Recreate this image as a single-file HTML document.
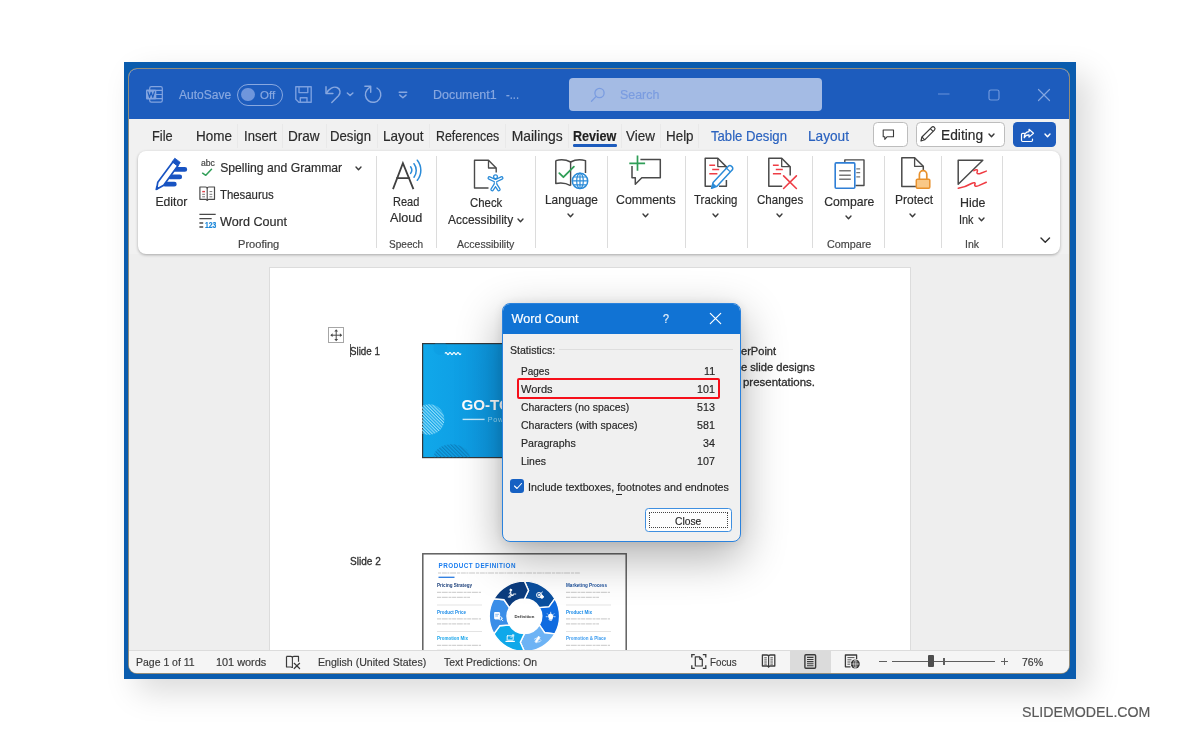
<!DOCTYPE html>
<html>
<head>
<meta charset="utf-8">
<title>Word Count</title>
<style>
*{box-sizing:border-box;margin:0;padding:0}
html,body{width:1199px;height:742px;overflow:hidden;background:#fff}
body{font-family:"Liberation Sans",sans-serif;color:#2b2b2b;position:relative}
#root{position:absolute;left:0;top:0;width:1199px;height:742px;will-change:transform}
.a{position:absolute;display:block}
.t{position:absolute;white-space:nowrap;line-height:1;transform-origin:0 50%;-webkit-text-stroke:.18px currentColor}
</style>
</head>
<body><div id="root">
<div class="a" style="left:124.00px;top:62.00px;width:952.00px;height:617.00px;box-shadow:13px 13px 30px 0 rgba(0,0,0,.145);background:#0a5cae;"></div>
<div class="a" id="win" style="left:129px;top:69.3px;width:940px;height:603.3px;border-radius:8px;background:#f1f1f1;overflow:hidden;box-shadow:0 0 0 1px #958e7a;"></div>
<div class="a" style="left:129.00px;top:69.30px;width:940.00px;height:49.70px;background:#1d5cbd;border-radius:8px 8px 0 0;"></div>
<div class="a" style="left:129.00px;top:254.00px;width:940.00px;height:396.00px;background:#eeeeee;"></div>
<div class="a" style="left:269.50px;top:268.30px;width:640.30px;height:382.00px;background:#fff;box-shadow:0 0 0 1px #dcdcdc;"></div>
<div class="a" style="left:129.00px;top:649.50px;width:940.00px;height:23.10px;background:#f5f5f5;border-top:1px solid #dcdcdc;border-radius:0 0 8px 8px;"></div>
<div class="a" style="left:138.00px;top:151.00px;width:922.40px;height:103.00px;background:#fff;border-radius:8px;box-shadow:0 1px 3px rgba(0,0,0,.30);"></div>
<svg class="a" style="left:143.00px;top:83.00px;" width="24" height="24" viewBox="143 83 24 24" fill="none"><rect x="149.700" y="86.600" width="12.600" height="15.600" rx="1.600" stroke="#82a4e0" stroke-width="1.200"/>
<path d="M156 90.400H162.300M156 94.500H162.300M156 98.600H162.300" stroke="#82a4e0" stroke-width="1.100"/>
<rect x="146" y="89.600" width="10.300" height="10" rx="1.100" fill="#82a4e0"/>
<path d="M147.900 91.900L149.500 97.400L151.150 92.200L152.800 97.400L154.400 91.900" stroke="#1d5cbd" stroke-width="1.200" stroke-linejoin="round" stroke-linecap="round"/></svg>
<div class="t" style="left:178.70px;top:89.00px;font-size:12.40px;color:#88a8e0;transform:scaleX(0.9726);">AutoSave</div>
<div class="a" style="left:237.00px;top:84.00px;width:46.00px;height:21.50px;border:1.3px solid #88a8e0;border-radius:11px;"></div>
<div class="a" style="left:241.20px;top:87.60px;width:13.80px;height:13.80px;background:#6f96dc;border-radius:50%;"></div>
<div class="t" style="left:260.30px;top:90.00px;font-size:10.60px;color:#88a8e0;transform:scaleX(1.0830);">Off</div>
<svg class="a" style="left:292.00px;top:83.00px;" width="24" height="24" viewBox="292 83 24 24" fill="none"><g stroke="#7a9fe0" stroke-width="1.400" stroke-linejoin="round"><path d="M295.800 86.800H311.200V102.200H298.800L295.800 99.200z"/>
<path d="M299 86.800V92.600H307.800V86.800M300.300 102.200V97.800H307V102.200"/></g></svg>
<svg class="a" style="left:320.00px;top:80.00px;" width="95" height="30" viewBox="320 80 95 30" fill="none"><g stroke="#88a8e0" stroke-width="1.450" stroke-linecap="round" stroke-linejoin="round">
<path d="M326 86.800V93.400H332.900"/>
<path d="M326.600 93C329 88.400 333.400 86.200 337 87.500C340.400 88.800 341 93 338.500 95.800L331.800 102.400"/>
<path d="M347.300 92.900L350.100 95.600L352.900 92.900"/>
<path d="M364.900 86.300H370.700V92.200"/>
<path d="M370.300 86.800L367.100 89.800A7.700 7.700 0 1 0 377 88"/>
<path d="M399.200 92.300H406.700"/><path d="M399.800 95.100L402.900 97.800L406 95.100"/>
</g></svg>
<div class="t" style="left:433.30px;top:89.00px;font-size:12.40px;color:#88a8e0;transform:scaleX(1.0045);">Document1</div>
<div class="t" style="left:505.50px;top:89.00px;font-size:12.40px;color:#88a8e0;transform:scaleX(0.8988);">-...</div>
<div class="a" style="left:569.00px;top:78.00px;width:253.00px;height:33.00px;background:#a4bbe4;border-radius:4px;"></div>
<svg class="a" style="left:589.00px;top:86.00px;" width="18" height="18" viewBox="0 0 18 18" fill="none"><circle cx="10.500" cy="7" r="4.600" stroke="#7a9ce0" stroke-width="1.300"/><path d="M7.200 10.400L2.500 15.300" stroke="#7a9ce0" stroke-width="1.300" stroke-linecap="round"/></svg>
<div class="t" style="left:619.60px;top:89.00px;font-size:12.60px;color:#7a9ce0;transform:scaleX(0.9869);">Search</div>
<svg class="a" style="left:937.00px;top:89.00px;" width="14" height="10" viewBox="0 0 14 10" fill="none"><path d="M1 5h11.500" stroke="#5f8ad6" stroke-width="1.200"/></svg>
<svg class="a" style="left:988.00px;top:89.00px;" width="12" height="12" viewBox="0 0 12 12" fill="none"><rect x="1" y="1" width="10" height="10" rx="1.800" stroke="#6f97dc" stroke-width="1.200"/></svg>
<svg class="a" style="left:1037.00px;top:88.00px;" width="14" height="14" viewBox="0 0 14 14" fill="none"><path d="M1.500 1.500l11 11M12.500 1.500l-11 11" stroke="#84a6e0" stroke-width="1.200" stroke-linecap="round"/></svg>
<div class="t" style="left:151.70px;top:130.00px;font-size:13.90px;color:#2a2a2a;transform:scaleX(0.9197);">File</div>
<div class="t" style="left:195.70px;top:130.00px;font-size:13.90px;color:#2a2a2a;transform:scaleX(0.9709);">Home</div>
<div class="t" style="left:244.00px;top:130.00px;font-size:13.90px;color:#2a2a2a;transform:scaleX(0.9406);">Insert</div>
<div class="t" style="left:288.30px;top:130.00px;font-size:13.90px;color:#2a2a2a;transform:scaleX(0.9773);">Draw</div>
<div class="t" style="left:330.00px;top:130.00px;font-size:13.90px;color:#2a2a2a;transform:scaleX(0.9476);">Design</div>
<div class="t" style="left:382.70px;top:130.00px;font-size:13.90px;color:#2a2a2a;transform:scaleX(0.9728);">Layout</div>
<div class="t" style="left:435.70px;top:130.00px;font-size:13.90px;color:#2a2a2a;transform:scaleX(0.8905);">References</div>
<div class="t" style="left:511.70px;top:130.00px;font-size:13.90px;color:#2a2a2a;">Mailings</div>
<div class="t" style="left:573.30px;top:130.00px;font-size:13.90px;color:#1f1f1f;font-weight:bold;transform:scaleX(0.9060);">Review</div>
<div class="a" style="left:573.00px;top:144.30px;width:44.00px;height:2.60px;background:#1d5cbd;border-radius:1.3px;"></div>
<div class="t" style="left:626.00px;top:130.00px;font-size:13.90px;color:#2a2a2a;transform:scaleX(0.9706);">View</div>
<div class="t" style="left:665.70px;top:130.00px;font-size:13.90px;color:#2a2a2a;transform:scaleX(0.9654);">Help</div>
<div class="t" style="left:710.70px;top:130.00px;font-size:13.90px;color:#2a62bf;transform:scaleX(0.9457);">Table Design</div>
<div class="t" style="left:808.30px;top:130.00px;font-size:13.90px;color:#2a62bf;transform:scaleX(0.9824);">Layout</div>
<div class="a" style="left:237.30px;top:124.00px;width:1.00px;height:24.00px;background:#e9e9e9;"></div>
<div class="a" style="left:282.00px;top:124.00px;width:1.00px;height:24.00px;background:#e9e9e9;"></div>
<div class="a" style="left:325.70px;top:124.00px;width:1.00px;height:24.00px;background:#e9e9e9;"></div>
<div class="a" style="left:376.70px;top:124.00px;width:1.00px;height:24.00px;background:#e9e9e9;"></div>
<div class="a" style="left:429.00px;top:124.00px;width:1.00px;height:24.00px;background:#e9e9e9;"></div>
<div class="a" style="left:505.00px;top:124.00px;width:1.00px;height:24.00px;background:#e9e9e9;"></div>
<div class="a" style="left:567.50px;top:124.00px;width:1.00px;height:24.00px;background:#e9e9e9;"></div>
<div class="a" style="left:621.00px;top:124.00px;width:1.00px;height:24.00px;background:#e9e9e9;"></div>
<div class="a" style="left:660.00px;top:124.00px;width:1.00px;height:24.00px;background:#e9e9e9;"></div>
<div class="a" style="left:697.50px;top:124.00px;width:1.00px;height:24.00px;background:#e9e9e9;"></div>
<div class="a" style="left:873.20px;top:122.40px;width:34.60px;height:24.60px;background:#fff;border:1px solid #bdbdbd;border-radius:4.500px;"></div>
<svg class="a" style="left:882.00px;top:129.00px;" width="13" height="12" viewBox="0 0 13 12" fill="none"><path d="M1.200 1h10.300v6.700H5.200L2.800 10.300V7.700H1.200z" stroke="#3a3a3a" stroke-width="1.100" stroke-linejoin="round"/></svg>
<div class="a" style="left:916.40px;top:122.40px;width:88.60px;height:24.60px;background:#fff;border:1px solid #bdbdbd;border-radius:4.500px;"></div>
<svg class="a" style="left:918.20px;top:125.30px;" width="20" height="20" viewBox="0 0 20 20" fill="none"><path d="M3 16l.9-4L13.600 2.300c.8-.8 2-.8 2.800 0s.8 2 0 2.800L6.700 14.800z" stroke="#3a3a3a" stroke-width="1.200" stroke-linejoin="round"/><path d="M3.900 12l2.800 2.800M12.300 3.600l2.800 2.800" stroke="#3a3a3a" stroke-width="1.100"/></svg>
<div class="t" style="left:941.40px;top:129.00px;font-size:13.90px;color:#2a2a2a;transform:scaleX(0.9905);">Editing</div>
<svg class="a" style="left:987.50px;top:133.20px;" width="7" height="4.8" viewBox="0 0 7 4.8" fill="none"><path d="M1 1 L3.5 3.8 L6 1" stroke="#3a3a3a" stroke-width="1.4" stroke-linecap="round" stroke-linejoin="round"/></svg>
<div class="a" style="left:1013.20px;top:122.00px;width:43.00px;height:25.20px;background:#1d5cbd;border-radius:4.500px;"></div>
<svg class="a" style="left:1020.00px;top:127.50px;" width="15" height="15" viewBox="0 0 15 15" fill="none"><path d="M4.500 5.300H2.700c-.7 0-1.200.5-1.200 1.200v5.800c0 .7.500 1.200 1.200 1.200h8.600c.7 0 1.200-.5 1.200-1.200V11" stroke="#fff" stroke-width="1.200" stroke-linecap="round"/><path d="M9 1.300l4.500 3.900L9 9.100V6.800C6.500 6.800 5 7.800 4.200 9.800 4.200 6 6 3.800 9 3.600z" stroke="#fff" stroke-width="1.200" stroke-linejoin="round"/></svg>
<svg class="a" style="left:1043.90px;top:132.90px;" width="7" height="4.8" viewBox="0 0 7 4.8" fill="none"><path d="M1 1 L3.5 3.8 L6 1" stroke="#fff" stroke-width="1.4" stroke-linecap="round" stroke-linejoin="round"/></svg>
<div class="a" style="left:376.00px;top:156.00px;width:1.00px;height:92.00px;background:#dcdcdc;"></div>
<div class="a" style="left:436.00px;top:156.00px;width:1.00px;height:92.00px;background:#dcdcdc;"></div>
<div class="a" style="left:535.00px;top:156.00px;width:1.00px;height:92.00px;background:#dcdcdc;"></div>
<div class="a" style="left:607.00px;top:156.00px;width:1.00px;height:92.00px;background:#dcdcdc;"></div>
<div class="a" style="left:685.00px;top:156.00px;width:1.00px;height:92.00px;background:#dcdcdc;"></div>
<div class="a" style="left:747.00px;top:156.00px;width:1.00px;height:92.00px;background:#dcdcdc;"></div>
<div class="a" style="left:812.00px;top:156.00px;width:1.00px;height:92.00px;background:#dcdcdc;"></div>
<div class="a" style="left:884.00px;top:156.00px;width:1.00px;height:92.00px;background:#dcdcdc;"></div>
<div class="a" style="left:941.00px;top:156.00px;width:1.00px;height:92.00px;background:#dcdcdc;"></div>
<div class="a" style="left:1002.00px;top:156.00px;width:1.00px;height:92.00px;background:#dcdcdc;"></div>
<svg class="a" style="left:138.00px;top:151.00px;" width="923" height="103" viewBox="138 151 923 103" fill="none"><g stroke="#1853c2" stroke-width="4.800" stroke-linecap="round"><path d="M175 169.400H184.800M170 176.900H179.700M165 184.200H174.300"/></g>
<path d="M173 161.800L178 165.600L163.700 185.200L156.600 189.300L157.800 182.200z" fill="#fff" stroke="#1853c2" stroke-width="1.700" stroke-linejoin="round"/>
<path d="M174.800 158.200L180.300 162.400L177.900 165.900L172.200 161.700z" fill="#1853c2" stroke="#1853c2" stroke-width=".8" stroke-linejoin="round"/>
<path d="M155.900 189.900L156.500 186.300L159 188z" fill="#1853c2" stroke="#1853c2" stroke-width=".8" stroke-linejoin="round"/><path d="M202.600 173.200L205.800 175.300L211.500 169.200" stroke="#2f9e57" stroke-width="1.500" stroke-linecap="round" stroke-linejoin="round"/><path d="M199.900 187h5.600c.9 0 1.700.6 1.700 1.400 0-.8.800-1.400 1.700-1.400h5.600v12.300h-5.600c-.9 0-1.700.5-1.700 1.200 0-.7-.8-1.200-1.700-1.200h-5.600z" stroke="#4a4a4a" stroke-width="1.200" stroke-linejoin="round"/>
<path d="M207.200 188.500v12" stroke="#4a4a4a" stroke-width="1.100"/>
<path d="M202.200 191.600h2.800" stroke="#e0434b" stroke-width="1.400"/><path d="M202.200 194.300h2.800M202.200 196.800h2.800M209.500 191.600h2.800M209.500 194.300h2.800M209.500 196.800h2.800" stroke="#777" stroke-width="1"/><path d="M199.400 214.400H215.700M199.400 218.600H211.700" stroke="#4a4a4a" stroke-width="1.300"/>
<path d="M199.400 222.900H203.200M199.400 227.100H203.200" stroke="#4a4a4a" stroke-width="1.500"/><path d="M393.300 188.300L402.900 163.200L413.100 188.300M397 178.200H409.200" stroke="#404040" stroke-width="1.800" stroke-linecap="square"/><g stroke="#2a8bd8" stroke-width="1.500" stroke-linecap="round"><path d="M410.600 166.800c1.500 2 1.500 4.600 0 6.600"/>
<path d="M414 163.700c3 4 3 9.500 0 13.500"/><path d="M417.300 160.200c4.700 6 4.700 14.100 0 20.100"/></g><path d="M496.200 172.500V168l-7.700-7.700H474.500v27.700h14" stroke="#4a4a4a" stroke-width="1.400" stroke-linejoin="round"/>
<path d="M488.500 160.300v7.700h7.700" stroke="#4a4a4a" stroke-width="1.300" stroke-linejoin="round"/>
<g stroke-linecap="round" stroke-linejoin="round"><path d="M489.400 178L495.500 180.900L501.600 178M495.500 180.900V184.600M495.500 184.400L492.200 189.500M495.500 184.400L498.800 189.500" stroke="#fff" stroke-width="5.400"/>
<path d="M489.400 178L495.500 180.900L501.600 178M495.500 180.900V184.600M495.500 184.400L492.200 189.500M495.500 184.400L498.800 189.500" stroke="#2a8bd8" stroke-width="3.800"/>
<path d="M489.400 178L495.500 180.900L501.600 178M495.500 180.900V184.600M495.500 184.400L492.200 189.500M495.500 184.400L498.800 189.500" stroke="#fff" stroke-width="1.300"/></g>
<circle cx="495.500" cy="176.700" r="1.900" fill="#fff" stroke="#2a8bd8" stroke-width="1.300"/><path d="M555.800 160.600c4.500-1.300 10-1.200 14.800 1.400c4.800-2.600 10.300-2.700 14.900-1.400V173" stroke="#4a4a4a" stroke-width="1.500" stroke-linejoin="round"/>
<path d="M555.800 160.600V183.600c4.500-1 10-.6 14.800 2" stroke="#4a4a4a" stroke-width="1.500" stroke-linejoin="round"/>
<path d="M570.600 162V185.600" stroke="#4a4a4a" stroke-width="1.400"/>
<path d="M559.300 173.100L563.400 177.200L573.900 166.700" stroke="#2f9e57" stroke-width="1.800" stroke-linecap="round" stroke-linejoin="round"/>
<circle cx="580" cy="180.900" r="7.700" fill="#fff" stroke="#2a8bd8" stroke-width="1.500"/>
<ellipse cx="580" cy="180.900" rx="3.300" ry="7.700" stroke="#2a8bd8" stroke-width="1.200"/>
<path d="M572.300 180.900h15.400M573.500 177h13M573.500 184.800h13M580 173.200v15.400" stroke="#2a8bd8" stroke-width="1.200"/><path d="M640.400 159.500H660.300V177.800H641.800L635.300 184.200V177.800H632V166.100" stroke="#4a4a4a" stroke-width="1.500" stroke-linejoin="round"/>
<path d="M637.500 155.600V170.800M629.300 163.400H645.100" stroke="#2f9e57" stroke-width="1.700"/><path d="M726.400 170V166.900L717.800 158.300H705.200V186.300H711.500M719 186.300H726.400V180" stroke="#4a4a4a" stroke-width="1.500" stroke-linejoin="round"/>
<path d="M717.800 158.300V166.600H726.400" stroke="#4a4a4a" stroke-width="1.300" stroke-linejoin="round"/>
<path d="M709.300 165.300H715.100M712.200 169.600H719.200M709.300 173.700H717.400" stroke="#ee3d45" stroke-width="1.500"/>
<path d="M728.300 166.300c.9-.9 2.300-.9 3.200 0l.6.600c.9.900.9 2.300 0 3.200L717 186.200L711.600 188.300L713.100 182.500z" fill="#fff" stroke="#2a8bd8" stroke-width="1.500" stroke-linejoin="round"/>
<path d="M726.500 168.200L730.300 171.900" stroke="#2a8bd8" stroke-width="1.200"/>
<path d="M711.600 188.300L713 182.900L716.800 186.400z" fill="#2a8bd8"/><path d="M790.200 175.400V166.900L781.700 158.300H768.800V186.300H782.200" stroke="#4a4a4a" stroke-width="1.500" stroke-linejoin="round"/>
<path d="M781.700 158.300V166.600H790.200" stroke="#4a4a4a" stroke-width="1.300" stroke-linejoin="round"/>
<path d="M772.900 165.300H778.700M775.800 169.600H782.800M772.900 173.700H781.100" stroke="#ee3d45" stroke-width="1.500"/>
<path d="M783.600 175.900L796.400 188.500M796.400 175.900L783.600 188.500" stroke="#ee3d45" stroke-width="1.600" stroke-linecap="round"/><path d="M844.800 162.500V159.900H864V185.500H855.500" stroke="#4a4a4a" stroke-width="1.400" stroke-linejoin="round"/>
<path d="M856.300 168.800H860.200M856.300 172.700H860.200M856.300 176.800H860.200" stroke="#777" stroke-width="1.200"/>
<rect x="835.200" y="162.900" width="19.600" height="25.300" rx="1" fill="#fff" stroke="#2f7fd6" stroke-width="1.600"/>
<path d="M839.200 170.800H850.800M839.200 175.300H850.800M839.200 179.300H850.800" stroke="#777" stroke-width="1.400"/><path d="M923.300 170V166.300L914.600 157.700H901.800V186.500H916" stroke="#4a4a4a" stroke-width="1.500" stroke-linejoin="round"/>
<path d="M914.600 157.700V166.300H923.300" stroke="#4a4a4a" stroke-width="1.300" stroke-linejoin="round"/>
<path d="M919.400 179.200V174.600c0-2.200 1.600-3.900 3.700-3.900s3.700 1.700 3.700 3.900V179.200" stroke="#e8912d" stroke-width="1.700"/>
<rect x="916.300" y="179.200" width="13.500" height="9" rx="1.100" fill="#f9c887" stroke="#e8912d" stroke-width="1.500"/><path d="M958.200 160.300H982.800L958.200 184.200z" stroke="#4a4a4a" stroke-width="1.500" stroke-linejoin="round"/>
<path d="M973.900 170.700c2.600-1.900 4.200-.9 3.300 1s.7 2.800 3.700 1.600l5.400-2.200" stroke="#ef3b42" stroke-width="1.500" stroke-linecap="round" stroke-linejoin="round"/>
<path d="M958.300 188.300c5-.8 9.300-2.500 13.200-4.800 2.900-1.700 4.200-.5 3.400.9s.5 2.400 3.800 1.200l7.600-3.300" stroke="#ef3b42" stroke-width="1.500" stroke-linecap="round" stroke-linejoin="round"/></svg>
<div class="t" style="left:155.40px;top:196.00px;font-size:12.20px;color:#2d2d2d;">Editor</div>
<div class="t" style="left:200.70px;top:159.00px;font-size:8.40px;color:#444;transform:scaleX(1.0263);">abc</div>
<div class="t" style="left:220.20px;top:162.00px;font-size:12.20px;color:#2d2d2d;">Spelling and Grammar</div>
<svg class="a" style="left:355.20px;top:165.95px;" width="7" height="4.7" viewBox="0 0 7 4.7" fill="none"><path d="M1 1 L3.5 3.7 L6 1" stroke="#3b3b3b" stroke-width="1.4" stroke-linecap="round" stroke-linejoin="round"/></svg>
<div class="t" style="left:220.20px;top:189.00px;font-size:12.20px;color:#2d2d2d;transform:scaleX(0.9333);">Thesaurus</div>
<div class="t" style="left:204.90px;top:222.00px;font-size:8.20px;color:#1a86d8;font-weight:bold;transform:scaleX(0.8332);">123</div>
<div class="t" style="left:220.20px;top:216.00px;font-size:12.20px;color:#2d2d2d;transform:scaleX(1.0343);">Word Count</div>
<div class="t" style="left:238.30px;top:239.00px;font-size:10.60px;color:#444;transform:scaleX(1.0460);">Proofing</div>
<div class="t" style="left:393.30px;top:196.00px;font-size:12.20px;color:#2d2d2d;transform:scaleX(0.9017);">Read</div>
<div class="t" style="left:390.40px;top:212.00px;font-size:12.20px;color:#2d2d2d;transform:scaleX(1.0351);">Aloud</div>
<div class="t" style="left:389.20px;top:239.00px;font-size:10.60px;color:#444;transform:scaleX(0.9485);">Speech</div>
<div class="t" style="left:470.00px;top:197.00px;font-size:12.20px;color:#2d2d2d;transform:scaleX(0.9340);">Check</div>
<div class="t" style="left:447.50px;top:214.00px;font-size:12.20px;color:#2d2d2d;transform:scaleX(0.9813);">Accessibility</div>
<svg class="a" style="left:516.50px;top:218.15px;" width="7" height="4.7" viewBox="0 0 7 4.7" fill="none"><path d="M1 1 L3.5 3.7 L6 1" stroke="#3b3b3b" stroke-width="1.4" stroke-linecap="round" stroke-linejoin="round"/></svg>
<div class="t" style="left:457.00px;top:239.00px;font-size:10.60px;color:#444;transform:scaleX(0.9943);">Accessibility</div>
<div class="t" style="left:544.90px;top:194.00px;font-size:12.20px;color:#2d2d2d;transform:scaleX(0.9745);">Language</div>
<svg class="a" style="left:567.40px;top:213.25px;" width="7" height="4.7" viewBox="0 0 7 4.7" fill="none"><path d="M1 1 L3.5 3.7 L6 1" stroke="#3b3b3b" stroke-width="1.4" stroke-linecap="round" stroke-linejoin="round"/></svg>
<div class="t" style="left:615.90px;top:194.00px;font-size:12.20px;color:#2d2d2d;transform:scaleX(1.0105);">Comments</div>
<svg class="a" style="left:642.20px;top:213.25px;" width="7" height="4.7" viewBox="0 0 7 4.7" fill="none"><path d="M1 1 L3.5 3.7 L6 1" stroke="#3b3b3b" stroke-width="1.4" stroke-linecap="round" stroke-linejoin="round"/></svg>
<div class="t" style="left:694.40px;top:194.00px;font-size:12.20px;color:#2d2d2d;transform:scaleX(0.9389);">Tracking</div>
<svg class="a" style="left:712.20px;top:213.25px;" width="7" height="4.7" viewBox="0 0 7 4.7" fill="none"><path d="M1 1 L3.5 3.7 L6 1" stroke="#3b3b3b" stroke-width="1.4" stroke-linecap="round" stroke-linejoin="round"/></svg>
<div class="t" style="left:756.80px;top:194.00px;font-size:12.20px;color:#2d2d2d;transform:scaleX(0.9460);">Changes</div>
<svg class="a" style="left:776.20px;top:213.25px;" width="7" height="4.7" viewBox="0 0 7 4.7" fill="none"><path d="M1 1 L3.5 3.7 L6 1" stroke="#3b3b3b" stroke-width="1.4" stroke-linecap="round" stroke-linejoin="round"/></svg>
<div class="t" style="left:824.20px;top:196.00px;font-size:12.20px;color:#2d2d2d;">Compare</div>
<svg class="a" style="left:845.30px;top:214.95px;" width="7" height="4.7" viewBox="0 0 7 4.7" fill="none"><path d="M1 1 L3.5 3.7 L6 1" stroke="#3b3b3b" stroke-width="1.4" stroke-linecap="round" stroke-linejoin="round"/></svg>
<div class="t" style="left:827.00px;top:239.00px;font-size:10.60px;color:#444;transform:scaleX(1.0184);">Compare</div>
<div class="t" style="left:894.60px;top:194.00px;font-size:12.20px;color:#2d2d2d;transform:scaleX(0.9832);">Protect</div>
<svg class="a" style="left:909.30px;top:213.05px;" width="7" height="4.7" viewBox="0 0 7 4.7" fill="none"><path d="M1 1 L3.5 3.7 L6 1" stroke="#3b3b3b" stroke-width="1.4" stroke-linecap="round" stroke-linejoin="round"/></svg>
<div class="t" style="left:959.60px;top:197.00px;font-size:12.20px;color:#2d2d2d;transform:scaleX(1.0163);">Hide</div>
<div class="t" style="left:958.90px;top:214.00px;font-size:12.20px;color:#2d2d2d;transform:scaleX(0.8910);">Ink</div>
<svg class="a" style="left:977.90px;top:217.15px;" width="7" height="4.7" viewBox="0 0 7 4.7" fill="none"><path d="M1 1 L3.5 3.7 L6 1" stroke="#3b3b3b" stroke-width="1.4" stroke-linecap="round" stroke-linejoin="round"/></svg>
<div class="t" style="left:965.00px;top:239.00px;font-size:10.60px;color:#444;transform:scaleX(0.9901);">Ink</div>
<svg class="a" style="left:1040.15px;top:237.20px;" width="10.5" height="6.2" viewBox="0 0 10.5 6.2" fill="none"><path d="M1 1 L5.25 5.2 L9.5 1" stroke="#2d2d2d" stroke-width="1.4" stroke-linecap="round" stroke-linejoin="round"/></svg>
<div class="a" style="left:328.20px;top:327.20px;width:16.00px;height:16.00px;background:#fff;border:1.300px solid #a6a6a6;"></div>
<svg class="a" style="left:330.00px;top:329.00px;" width="12.5" height="12.5" viewBox="0 0 12.5 12.5" fill="none"><path d="M6.200 1.300v9.900M1.300 6.200h9.900" stroke="#4a4a4a" stroke-width="1"/><path d="M6.200 .3l1.900 2.300H4.300zM6.200 12.200l1.900-2.300H4.300zM.3 6.200l2.300-1.900v3.800zM12.200 6.200l-2.300-1.900v3.800z" fill="#4a4a4a"/></svg>
<div class="a" style="left:349.50px;top:343.50px;width:1.00px;height:13.50px;background:#555;"></div>
<div class="t" style="left:350.40px;top:346.00px;font-size:10.90px;color:#2e2e2e;transform:scaleX(0.8971);-webkit-text-stroke:.3px #2e2e2e;">Slide 1</div>
<div class="t" style="left:349.90px;top:556.00px;font-size:10.90px;color:#2e2e2e;transform:scaleX(0.9241);-webkit-text-stroke:.3px #2e2e2e;">Slide 2</div>
<div class="t" style="left:741.20px;top:346.00px;font-size:10.90px;color:#2e2e2e;transform:scaleX(1.0163);-webkit-text-stroke:.3px #2e2e2e;">erPoint</div>
<div class="t" style="left:741.40px;top:362.00px;font-size:10.90px;color:#2e2e2e;transform:scaleX(1.0235);-webkit-text-stroke:.3px #2e2e2e;">e slide designs</div>
<div class="t" style="left:743.30px;top:377.00px;font-size:10.90px;color:#2e2e2e;transform:scaleX(1.0515);-webkit-text-stroke:.3px #2e2e2e;">presentations.</div>
<svg class="a" style="left:422.400px;top:343px" width="120" height="116" viewBox="0 0 120 116">
<defs><linearGradient id="g1" x1="0" y1="0" x2="1" y2="0"><stop offset="0" stop-color="#10a8ea"/><stop offset="1" stop-color="#0b8cda"/></linearGradient>
<pattern id="hs" width="2.300" height="2.300" patternUnits="userSpaceOnUse" patternTransform="rotate(-45)"><rect width="1.150" height="2.300" fill="#8fdcfa"/></pattern>
<pattern id="hd" width="2.600" height="2.600" patternUnits="userSpaceOnUse" patternTransform="rotate(-45)"><rect width="1.200" height="2.600" fill="#0c7fbe"/></pattern></defs>
<rect x=".6" y=".6" width="119" height="114" fill="url(#g1)" stroke="#33393c" stroke-width="1.200"/>
<circle cx="7" cy="76.500" r="15.300" fill="url(#hs)"/>
<path d="M11.700 114.300a18 13 0 0 1 36 0z" fill="url(#hd)"/>
<circle cx="18.400" cy="5" r="7" fill="#0c97dc" opacity=".35"/>
<path d="M23 10.600q1-2.200 2 0t2 0 2 0 2 0 2 0 2 0 2 0 2 0" fill="none" stroke="#fff" stroke-width="1.200"/>
<path d="M40.600 76.400h22" stroke="#c9ecfc" stroke-width="1.400"/>
<text x="39.400" y="67.200" font-family="Liberation Sans" font-weight="bold" font-size="14.400" fill="#fff" textLength="49.500" lengthAdjust="spacingAndGlyphs">GO-TO</text>
<text x="65.700" y="79" font-family="Liberation Sans" font-size="7.200" fill="#9adcf9" letter-spacing=".7">PowerPoint</text>
</svg>
<svg class="a" style="left:422px;top:553px" width="205" height="97" viewBox="0 0 205 97"><rect x=".8" y=".8" width="203.400" height="100" fill="#fff" stroke="#606060" stroke-width="1.500"/><text x="16.500" y="15.300" font-family="Liberation Sans" font-weight="bold" font-size="6.300" fill="#1a7df0" textLength="77" lengthAdjust="spacing">PRODUCT DEFINITION</text><path d="M16 20h142" stroke="#c9c9c9" stroke-width="1" stroke-dasharray="3 .8 5 .6 2 .7 6 .9"/><path d="M16.500 24.300h16" stroke="#2a7be0" stroke-width="1.300"/><path d="M102.40 28.10A35.2 35.2 0 0 1 132.88 45.70L126.91 53.89L117.38 54.65A17.3 17.3 0 0 0 102.40 46.00L106.51 37.37Z" fill="#0a4f9f" stroke="#fff" stroke-width="1.400"/><path d="M132.88 45.70A35.2 35.2 0 0 1 132.88 80.90L122.80 79.82L117.38 71.95A17.3 17.3 0 0 0 117.38 54.65L126.91 53.89Z" fill="#0f6be0" stroke="#fff" stroke-width="1.400"/><path d="M132.88 80.90A35.2 35.2 0 0 1 102.40 98.50L98.29 89.23L102.40 80.60A17.3 17.3 0 0 0 117.38 71.95L122.80 79.82Z" fill="#6db3f5" stroke="#fff" stroke-width="1.400"/><path d="M102.40 98.50A35.2 35.2 0 0 1 71.92 80.90L77.89 72.71L87.42 71.95A17.3 17.3 0 0 0 102.40 80.60L98.29 89.23Z" fill="#0fa8ea" stroke="#fff" stroke-width="1.400"/><path d="M71.92 80.90A35.2 35.2 0 0 1 71.92 45.70L82.00 46.78L87.42 54.65A17.3 17.3 0 0 0 87.42 71.95L77.89 72.71Z" fill="#3a8ee8" stroke="#fff" stroke-width="1.400"/><path d="M71.92 45.70A35.2 35.2 0 0 1 102.40 28.10L106.51 37.37L102.40 46.00A17.3 17.3 0 0 0 87.42 54.65L82.00 46.78Z" fill="#0b3c7e" stroke="#fff" stroke-width="1.400"/><text x="102.4" y="64.9" font-family="Liberation Sans" font-weight="bold" font-size="4.300" fill="#333" text-anchor="middle">Definition</text><g transform="translate(117.86 42.02)" stroke="#fff" fill="none" stroke-width=".9" stroke-linecap="round" stroke-linejoin="round"><circle cx="-.8" cy="0" r="2.600"/><circle cx="-.8" cy="0" r="1"/><circle cx="2" cy="1.800" r="1.500" fill="#fff"/><path d="M-.8 0L2.600-3"/></g><g transform="translate(128.68 64.22)" stroke="#fff" fill="none" stroke-width=".9" stroke-linecap="round" stroke-linejoin="round"><path d="M-1.500 .8a2.300 2.300 0 1 1 3 0v1.200h-3z" fill="#fff"/><path d="M-.8 3.300h1.600M-4.500-.5h1M3.500-.5h1M-3.300-3.500l.7.700M3.300-3.500l-.7.700M0-5v1" stroke-width=".7"/></g><g transform="translate(115.55 86.08)" stroke="#fff" fill="none" stroke-width=".9" stroke-linecap="round" stroke-linejoin="round"><path d="M-2.500 2.500L1-3l1.500 1.500L-1 3.500zM1.500-.5l2 2" fill="#fff" stroke-width=".6"/><path d="M-3 0l2-1M0 3l2.500-.5" stroke-width=".7"/></g><g transform="translate(88.46 85.60)" stroke="#fff" fill="none" stroke-width=".9" stroke-linecap="round" stroke-linejoin="round"><rect x="-3.300" y="-2.800" width="6" height="4.300" rx=".4"/><path d="M-4.500 2.800h8.400" stroke-width="1.100"/><path d="M.5-1l2.500-2.500M2-3.800h1.300v1.300" stroke-width=".8"/></g><g transform="translate(76.10 63.30)" stroke="#fff" fill="none" stroke-width=".9" stroke-linecap="round" stroke-linejoin="round"><rect x="-3.500" y="-3.800" width="5" height="6.500" rx=".5" fill="#fff"/><circle cx="2.300" cy="2" r="1.600" stroke-width=".8"/><path d="M3.500 3.200l1.200 1.200" stroke-width=".9"/><path d="M-2.500-2h3M-2.500-.3h2" stroke="#3a8ee8" stroke-width=".6"/></g><g transform="translate(89.25 40.52)" stroke="#fff" fill="none" stroke-width=".9" stroke-linecap="round" stroke-linejoin="round"><circle cx="-.5" cy="-3.500" r=".9" fill="#fff"/><path d="M-.5-2.300v2.800l1.800 1M-.5-1.300l-1.600 1.200M-.5.500l-1.500 2.500M-3 3.500h2.500v-1.500h2.500v-1.500h2.500"/></g><text x="15" y="34" font-family="Liberation Sans" font-weight="bold" font-size="4.600" fill="#1b3f7a" textLength="35" lengthAdjust="spacingAndGlyphs">Pricing Strategy</text><path d="M15 39.3h44M15 44.3h33" stroke="#d2d2d2" stroke-width="1.200" stroke-dasharray="4 .7 6 .8 3 .6"/><path d="M15 52h45" stroke="#dcdcdc" stroke-width=".8"/><text x="15" y="60.5" font-family="Liberation Sans" font-weight="bold" font-size="4.600" fill="#1a8be8" textLength="29" lengthAdjust="spacingAndGlyphs">Product Price</text><path d="M15 65.8h44M15 70.8h33" stroke="#d2d2d2" stroke-width="1.200" stroke-dasharray="4 .7 6 .8 3 .6"/><path d="M15 78.5h45" stroke="#dcdcdc" stroke-width=".8"/><text x="15" y="87" font-family="Liberation Sans" font-weight="bold" font-size="4.600" fill="#17a4ea" textLength="31" lengthAdjust="spacingAndGlyphs">Promotion Mix</text><path d="M15 92.3h44M15 97.3h33" stroke="#d2d2d2" stroke-width="1.200" stroke-dasharray="4 .7 6 .8 3 .6"/><path d="M15 105h45" stroke="#dcdcdc" stroke-width=".8"/><text x="144" y="34" font-family="Liberation Sans" font-weight="bold" font-size="4.600" fill="#1b4f9a" textLength="41" lengthAdjust="spacingAndGlyphs">Marketing Process</text><path d="M144 39.3h44M144 44.3h33" stroke="#d2d2d2" stroke-width="1.200" stroke-dasharray="4 .7 6 .8 3 .6"/><path d="M144 52h45" stroke="#dcdcdc" stroke-width=".8"/><text x="144" y="60.5" font-family="Liberation Sans" font-weight="bold" font-size="4.600" fill="#1a8be8" textLength="26" lengthAdjust="spacingAndGlyphs">Product Mix</text><path d="M144 65.8h44M144 70.8h33" stroke="#d2d2d2" stroke-width="1.200" stroke-dasharray="4 .7 6 .8 3 .6"/><path d="M144 78.5h45" stroke="#dcdcdc" stroke-width=".8"/><text x="144" y="87" font-family="Liberation Sans" font-weight="bold" font-size="4.600" fill="#3a9bf0" textLength="40" lengthAdjust="spacingAndGlyphs">Promotion &amp; Place</text><path d="M144 92.3h44M144 97.3h33" stroke="#d2d2d2" stroke-width="1.200" stroke-dasharray="4 .7 6 .8 3 .6"/><path d="M144 105h45" stroke="#dcdcdc" stroke-width=".8"/></svg>
<div class="a" style="left:502.4px;top:302.6px;width:238.2px;height:239px;border-radius:8px;background:#f0f0f0;border:1.500px solid #2a82dd;box-shadow:0 15px 44px 2px rgba(0,0,0,.30),0 1px 12px rgba(0,0,0,.10);overflow:hidden"><div style="height:30.500px;background:#1173d4"></div></div>
<div class="t" style="left:511.60px;top:313.00px;font-size:12.60px;color:#fff;">Word Count</div>
<div class="t" style="left:663.30px;top:313.00px;font-size:12.60px;color:#e8f1fb;transform:scaleX(0.8562);">?</div>
<svg class="a" style="left:708.50px;top:311.50px;" width="13" height="13" viewBox="0 0 13 13" fill="none"><path d="M1.300 1.300l10.400 10.400M11.700 1.300L1.300 11.700" stroke="#fff" stroke-width="1.200" stroke-linecap="round"/></svg>
<div class="t" style="left:510.30px;top:345.00px;font-size:11.50px;color:#262626;transform:scaleX(0.9186);">Statistics:</div>
<div class="a" style="left:559.00px;top:349.00px;width:173.50px;height:1.00px;background:#dedede;"></div>
<div class="t" style="left:520.90px;top:366.00px;font-size:11.50px;color:#262626;transform:scaleX(0.8709);">Pages</div>
<div class="t" style="left:703.70px;top:366.00px;font-size:11.50px;color:#262626;transform:scaleX(0.9300);">11</div>
<div class="t" style="left:520.90px;top:384.00px;font-size:11.50px;color:#262626;transform:scaleX(0.9570);">Words</div>
<div class="t" style="left:696.96px;top:384.00px;font-size:11.50px;color:#262626;transform:scaleX(0.9300);">101</div>
<div class="t" style="left:520.90px;top:402.00px;font-size:11.50px;color:#262626;transform:scaleX(0.9044);">Characters (no spaces)</div>
<div class="t" style="left:696.96px;top:402.00px;font-size:11.50px;color:#262626;transform:scaleX(0.9300);">513</div>
<div class="t" style="left:520.90px;top:420.00px;font-size:11.50px;color:#262626;transform:scaleX(0.9152);">Characters (with spaces)</div>
<div class="t" style="left:696.96px;top:420.00px;font-size:11.50px;color:#262626;transform:scaleX(0.9300);">581</div>
<div class="t" style="left:520.90px;top:438.00px;font-size:11.50px;color:#262626;transform:scaleX(0.9217);">Paragraphs</div>
<div class="t" style="left:702.90px;top:438.00px;font-size:11.50px;color:#262626;transform:scaleX(0.9300);">34</div>
<div class="t" style="left:520.90px;top:456.00px;font-size:11.50px;color:#262626;transform:scaleX(0.9057);">Lines</div>
<div class="t" style="left:696.96px;top:456.00px;font-size:11.50px;color:#262626;transform:scaleX(0.9300);">107</div>
<div class="a" style="left:517.30px;top:378.00px;width:202.50px;height:21.20px;border:2.500px solid #f60f1a;border-radius:2px;"></div>
<div class="a" style="left:510.30px;top:479.00px;width:14.00px;height:13.80px;background:#1661c3;border-radius:3px;"></div>
<svg class="a" style="left:512.50px;top:482.00px;" width="10" height="8" viewBox="0 0 10 8" fill="none"><path d="M1.500 4l2.500 2.500L8.500 1.500" stroke="#fff" stroke-width="1.100" stroke-linecap="round" stroke-linejoin="round"/></svg>
<div class="t" style="left:528.30px;top:482.00px;font-size:11.50px;color:#262626;transform:scaleX(0.9296);">Include textboxes, footnotes and endnotes</div>
<div class="a" style="left:616.30px;top:493.60px;width:5.50px;height:1.00px;background:#262626;"></div>
<div class="a" style="left:645.40px;top:507.80px;width:86.30px;height:24.40px;background:#fdfdfd;border:1.500px solid #3f8fe0;border-radius:3.500px;"></div>
<div class="a" style="left:649.20px;top:511.60px;width:78.70px;height:16.80px;border:1px dotted #444;"></div>
<div class="t" style="left:675.40px;top:516.00px;font-size:11.50px;color:#262626;transform:scaleX(0.8945);">Close</div>
<div class="t" style="left:136.00px;top:657.00px;font-size:10.90px;color:#3a3a3a;transform:scaleX(0.9621);">Page 1 of 11</div>
<div class="t" style="left:216.00px;top:657.00px;font-size:10.90px;color:#3a3a3a;">101 words</div>
<svg class="a" style="left:284.00px;top:653.00px;" width="18" height="18" viewBox="284 653 18 18" fill="none"><path d="M286.500 656.400H290.900c.9 0 1.500.5 1.500 1.200 0-.7.600-1.200 1.500-1.200H298.500V661.800M286.500 656.400V667H290.900c.9 0 1.500.4 1.500 1.100" stroke="#3a3a3a" stroke-width="1.200" stroke-linejoin="round"/><path d="M292.400 657.600V668" stroke="#3a3a3a" stroke-width="1.100"/><path d="M294.200 663.300L299.600 668.500M299.600 663.300L294.200 668.500" stroke="#3a3a3a" stroke-width="1.200" stroke-linecap="round"/></svg>
<div class="t" style="left:318.40px;top:657.00px;font-size:10.90px;color:#3a3a3a;transform:scaleX(0.9715);">English (United States)</div>
<div class="t" style="left:443.50px;top:657.00px;font-size:10.90px;color:#3a3a3a;transform:scaleX(0.9555);">Text Predictions: On</div>
<svg class="a" style="left:690.00px;top:652.00px;" width="18" height="19" viewBox="690 652 18 19" fill="none"><path d="M691.800 657.500V654.600H694.800M702.800 654.600H705.800V657.500M705.800 665.300V668.300H702.800M694.800 668.300H691.800V665.300" stroke="#3a3a3a" stroke-width="1.300"/><path d="M695.300 656.800H699.700L702.300 659.400V666H695.300z" stroke="#3a3a3a" stroke-width="1.200" stroke-linejoin="round"/><path d="M699.700 656.800V659.400H702.300" stroke="#3a3a3a" stroke-width="1"/></svg>
<div class="t" style="left:710.00px;top:657.00px;font-size:10.90px;color:#3a3a3a;transform:scaleX(0.8995);">Focus</div>
<svg class="a" style="left:760.00px;top:652.00px;" width="18" height="18" viewBox="760 652 18 18" fill="none"><path d="M762.400 655H767c.9 0 1.600.5 1.600 1.300 0-.8.700-1.300 1.600-1.300h4.600v11h-4.600c-.9 0-1.600.4-1.600 1.200 0-.8-.7-1.200-1.600-1.200h-4.600z" stroke="#3a3a3a" stroke-width="1.300" stroke-linejoin="round"/><path d="M768.600 656.500V667" stroke="#3a3a3a" stroke-width="1.200"/><path d="M764.300 657.800H766.800M764.300 659.900H766.800M764.300 662H766.800M764.300 664.100H766.800M770.400 657.800H772.900M770.400 659.900H772.900M770.400 662H772.900M770.400 664.100H772.900" stroke="#3a3a3a" stroke-width=".9"/></svg>
<div class="a" style="left:790.00px;top:650.50px;width:40.70px;height:22.50px;background:#dbdbdb;"></div>
<svg class="a" style="left:802.00px;top:652.00px;" width="16" height="18" viewBox="802 652 16 18" fill="none"><rect x="804.900" y="654.700" width="10.700" height="13.600" rx="1" stroke="#3a3a3a" stroke-width="1.400"/><path d="M807 657.400H813.500M807 659.500H813.500M807 661.600H813.500M807 663.700H813.500M807 665.800H813.500" stroke="#3a3a3a" stroke-width="1.100"/></svg>
<svg class="a" style="left:843.00px;top:652.00px;" width="18" height="18" viewBox="843 652 18 18" fill="none"><path d="M850.500 666.800H845.400V655H856.600V659" stroke="#3a3a3a" stroke-width="1.300" stroke-linejoin="round"/><path d="M847.400 657.600H854.500M847.400 659.800H851.500M847.400 662H850.500M847.400 664.200H850" stroke="#555" stroke-width="1"/><circle cx="855.300" cy="664" r="4.500" fill="#333"/><path d="M851.200 664H859.400M855.300 659.800V668.200" stroke="#e8e8e8" stroke-width=".7"/><ellipse cx="855.300" cy="664" rx="1.800" ry="4.200" stroke="#e8e8e8" stroke-width=".6" fill="none"/></svg>
<div class="a" style="left:879.00px;top:660.80px;width:7.70px;height:1.40px;background:#5e5e5e;"></div>
<div class="a" style="left:892.30px;top:660.80px;width:102.70px;height:1.40px;background:#5e5e5e;"></div>
<div class="a" style="left:943.40px;top:658.00px;width:1.30px;height:6.80px;background:#5e5e5e;"></div>
<div class="a" style="left:928.30px;top:654.80px;width:5.70px;height:12.20px;background:#4e4e4e;border-radius:1px;"></div>
<div class="a" style="left:1000.70px;top:660.80px;width:7.70px;height:1.40px;background:#5e5e5e;"></div>
<div class="a" style="left:1003.90px;top:657.60px;width:1.40px;height:7.70px;background:#5e5e5e;"></div>
<div class="t" style="left:1021.70px;top:657.00px;font-size:10.90px;color:#3a3a3a;transform:scaleX(0.9626);">76%</div>
<div class="t" style="left:1021.90px;top:705.00px;font-size:14.60px;color:#595959;transform:scaleX(0.9717);">SLIDEMODEL.COM</div>
</div></body>
</html>
